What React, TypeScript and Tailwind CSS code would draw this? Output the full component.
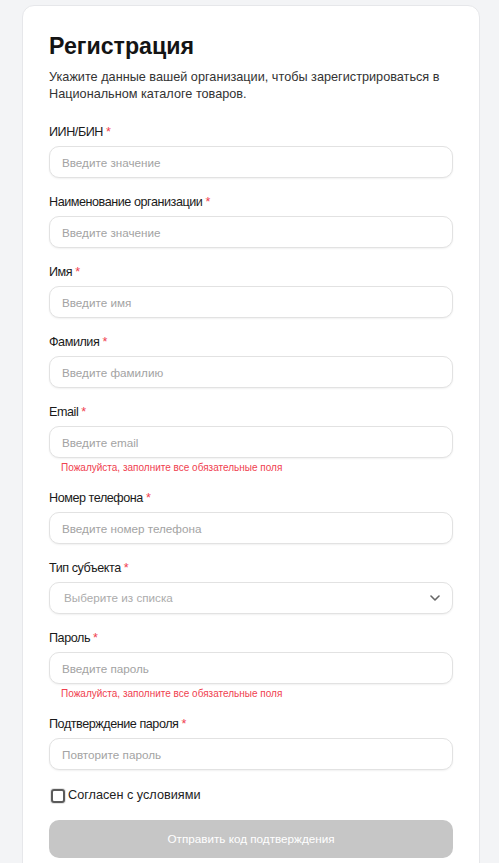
import React from "react";

type Field = {
  label: string;
  placeholder: string;
  select?: boolean;
  error?: boolean;
};

const fields: Field[] = [
  { label: "ИИН/БИН", placeholder: "Введите значение" },
  { label: "Наименование организации", placeholder: "Введите значение" },
  { label: "Имя", placeholder: "Введите имя" },
  { label: "Фамилия", placeholder: "Введите фамилию" },
  { label: "Email", placeholder: "Введите email", error: true },
  { label: "Номер телефона", placeholder: "Введите номер телефона" },
  { label: "Тип субъекта", placeholder: "Выберите из списка", select: true },
  { label: "Пароль", placeholder: "Введите пароль", error: true },
  { label: "Подтверждение пароля", placeholder: "Повторите пароль" },
];

function FieldRow({ f }: { f: Field }) {
  return (
    <div className="flex flex-col">
      <label className="text-[12.6px] leading-[16px] tracking-[-0.45px] text-[#1a1a1a]">
        {f.label} <span className="text-[#f0414f]">*</span>
      </label>
      <div className="mt-[6px] relative flex h-[32px] items-center rounded-[10px] border border-[#e2e2e2] bg-white shadow-[0_1px_2px_rgba(0,0,0,0.06)]">
        {f.select ? (
          <>
            <span className="pl-[14px] text-[11.7px] text-[#acacac]">{f.placeholder}</span>
            <svg
              className="absolute right-[12px] top-1/2 -translate-y-1/2"
              width="10"
              height="6"
              viewBox="0 0 10 6"
              fill="none"
            >
              <path d="M1 1l4 4 4-4" stroke="#666" strokeWidth="1.6" strokeLinecap="round" strokeLinejoin="round" />
            </svg>
          </>
        ) : (
          <input
            className="h-full w-full rounded-[10px] bg-transparent pl-[12px] text-[11.7px] text-[#222] placeholder:text-[#a3a3a3] outline-none"
            placeholder={f.placeholder}
          />
        )}
      </div>
      {f.error && (
        <div className="mt-[4px] pl-[12px] text-[10px] leading-[12px] text-[#f0414f]">
          Пожалуйста, заполните все обязательные поля
        </div>
      )}
    </div>
  );
}

export default function App() {
  return (
    <div
      className="min-h-[863px] bg-[#f3f4f6] pt-[5px] pl-[22px] pr-[19px]"
      style={{ fontFamily: '"Liberation Sans", Arial, sans-serif' }}
    >
      <div className="rounded-[12px] border border-[#e6e7ea] bg-white px-[26px] pt-[26px] pb-[20px]">
        <h1 className="text-[23.2px] leading-[29px] font-bold text-[#141414]">Регистрация</h1>
        <p className="mt-[8px] text-[12.7px] leading-[17px] text-[#333]">
          Укажите данные вашей организации, чтобы зарегистрироваться в Национальном каталоге товаров.
        </p>
        <div className="mt-[21px] flex flex-col gap-[16px]">
          {fields.map((f) => (
            <FieldRow key={f.label} f={f} />
          ))}
        </div>
        <label className="mt-[16px] flex h-[20px] items-center">
          <span className="ml-[2px] mr-[3px] box-border h-[14px] w-[14px] rounded-[3px] border-2 border-[#5b5b5b] bg-white shadow-[0_0_0_1px_#e4e4e4]" />
          <span className="text-[12.7px] text-[#222]">Согласен с условиями</span>
        </label>
        <button
          disabled
          className="mt-[14px] h-[38px] w-full rounded-[10px] bg-[#c6c6c6] text-[11.7px] text-white"
        >
          Отправить код подтверждения
        </button>
      </div>
    </div>
  );
}
